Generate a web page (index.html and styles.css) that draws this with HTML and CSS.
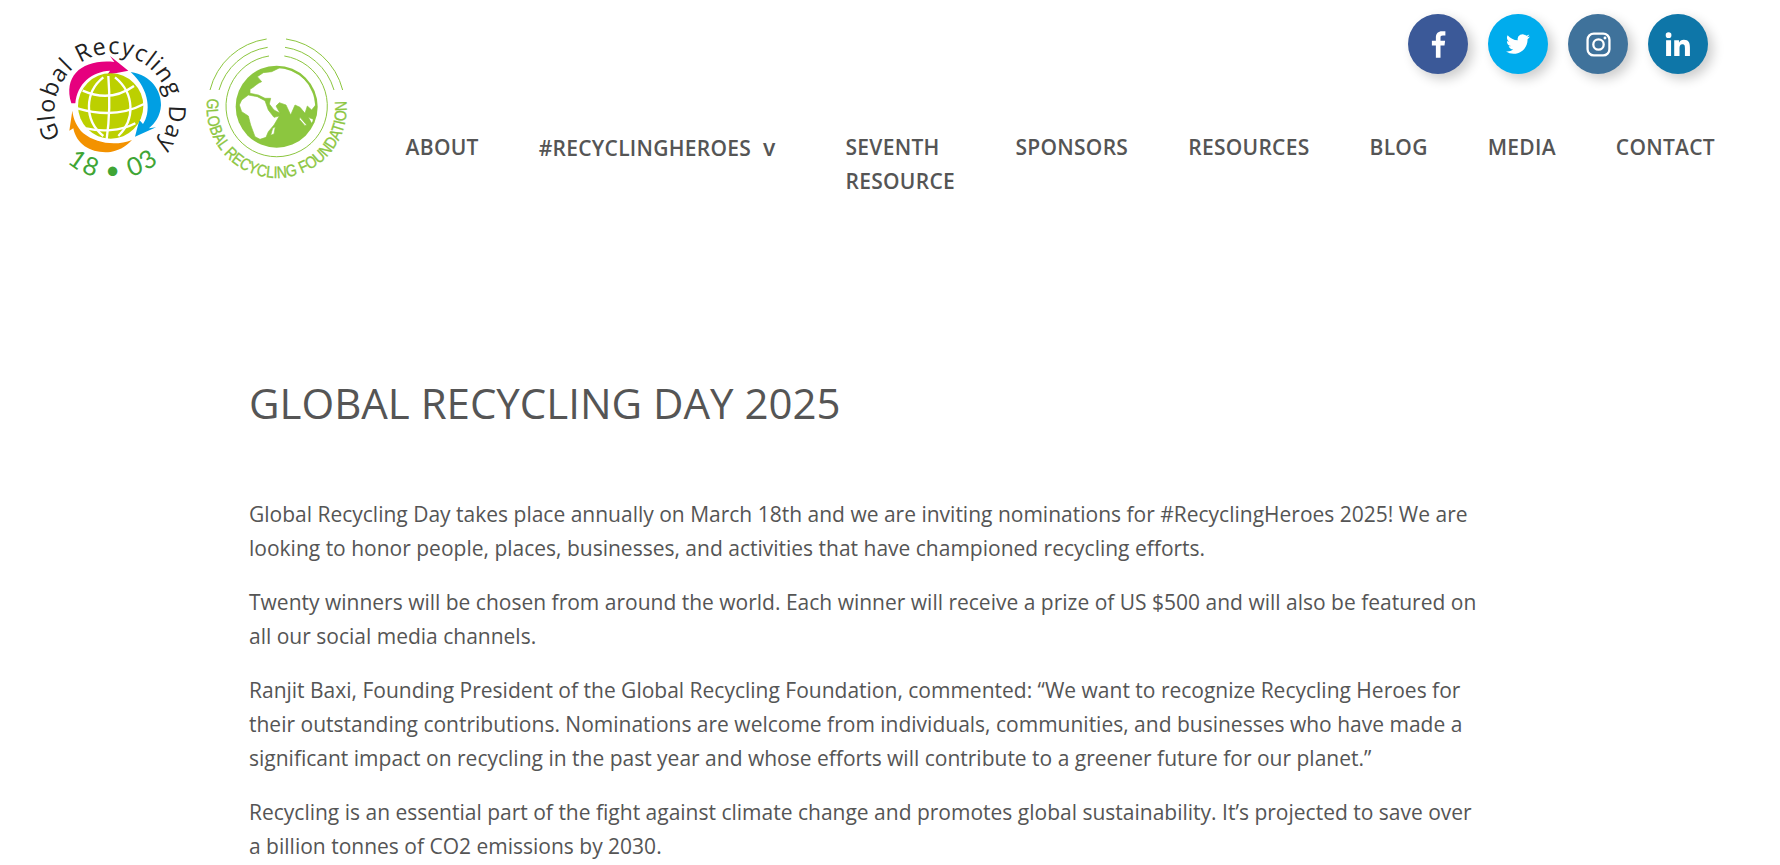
FILE: index.html
```html
<!DOCTYPE html>
<html lang="en">
<head>
  <meta charset="UTF-8">
  <title>Global Recycling Day 2025</title>
  <link rel="stylesheet" href="styles.css">
</head>
<body>
  <header class="site-header">
    <a class="logo" href="#">
      <svg class="logo-svg" viewBox="0 0 1020 510" width="340" height="170">
        <defs>
          <clipPath id="earth-clip"><circle cx="230" cy="230" r="116"/></clipPath>
        </defs>
        <!-- arrows -->
        <path fill="#e6007e" d="M154 250C128 165 190 116 283 126L270 108L325 152L262 164L270 152C215 155 172 190 166 250Z"/>
        <path fill="#009fe3" d="M332 156C395 165 424 215 423 255C421 290 404 310 387 325L408 322L345 350L358 300L369 312C392 280 392 210 332 156Z"/>
        <path fill="#f39200" d="M157 272L148 332L160 325C170 378 220 402 272 396C305 390 325 372 336 360C290 378 230 372 190 340C170 320 160 298 157 272Z"/>
        <!-- globe -->
        <circle cx="272" cy="258" r="98" fill="#bcd000"/>
        <g fill="none" stroke="#fff" stroke-width="7">
          <path d="M250 172C195 215 190 300 250 348"/>
          <path d="M285 172C345 220 345 300 295 348"/>
          <path d="M265 168C270 230 268 300 260 358"/>
          <path d="M188 212C240 235 290 235 342 198"/>
          <path d="M172 265C240 285 310 285 372 252"/>
          <path d="M198 325C240 335 300 335 346 310"/>
        </g>
        <!-- ring text -->
        <path id="ring" fill="none" d="M122 352A172 172 0 1 1 420 366"/>
        <text class="logo-ring"><textPath href="#ring" textLength="735">Global Recycling Day</textPath></text>
        <path id="date" fill="none" d="M117 403A210 210 0 0 0 439 403"/>
        <text class="logo-date"><textPath href="#date" startOffset="50%" text-anchor="middle" textLength="300">18 • 03</textPath></text>
        <!-- foundation logo -->
        <g fill="none" stroke="#8cc63f" stroke-width="3">
          <path d="M570 210A205 205 0 0 1 740 57M798 57A205 205 0 0 1 968 210"/>
          <path d="M597 210A180 180 0 0 1 743 82M795 82A180 180 0 0 1 942 210"/>
          <path d="M747 108A152 152 0 1 0 793 108"/>
        </g>
        <g transform="translate(540 30)">
          <circle cx="230" cy="230" r="123" fill="#8cc63f"/>
          <g fill="#fff" stroke="#8cc63f" stroke-width="2" clip-path="url(#earth-clip)">
            <path d="M150 178C165 170 170 160 185 155L172 140L190 128L215 125L240 113L268 117L300 135L325 160L342 195L347 225L335 240L322 228L315 250L300 232L285 225L272 255L258 225L238 218L228 228L240 250L222 240L208 222L212 205L195 205L175 195L150 190Z"/>
            <path d="M145 195L172 200L195 212L205 240L222 262L238 258L222 285L205 305L198 322L180 328L165 320L152 285L145 258L125 245L118 225L125 210Z"/>
            <path d="M218 295L226 290L222 312L212 316Z"/>
            <path d="M300 262L320 285L315 287L298 268Z"/>
            <path d="M325 262L345 270L335 280Z"/>
          </g>
        </g>
        <path id="gf" fill="none" d="M562 235A210 210 0 1 0 978 235"/>
        <text class="logo-gf"><textPath href="#gf" textLength="710" lengthAdjust="spacingAndGlyphs">GLOBAL RECYCLING FOUNDATION</textPath></text>
      </svg>
    </a>
    <div class="header-right">
      <div class="social">
        <a class="social-btn fb" href="#"><svg viewBox="0 0 24 24" width="30" height="30"><path fill="#fff" d="M14 23V13.2h3.2l.5-3.8H14V7c0-1.100.3-1.800 1.900-1.800h2V1.800C17.500 1.800 16.400 1.700 15.100 1.700c-2.800 0-4.800 1.700-4.800 4.900v2.800H7.100v3.800h3.200V23z"/></svg></a>
        <a class="social-btn tw" href="#"><svg viewBox="0 0 24 24" width="24" height="24"><path fill="#fff" d="M23.950 4.570a10 10 0 0 1-2.820.77 4.960 4.960 0 0 0 2.160-2.720c-.95.550-2 .96-3.130 1.190a4.920 4.920 0 0 0-8.380 4.480C7.690 8.090 4.070 6.130 1.640 3.160a4.820 4.820 0 0 0-.67 2.480c0 1.710.87 3.210 2.190 4.090a4.900 4.900 0 0 1-2.230-.61v.06a4.920 4.920 0 0 0 3.950 4.830 4.990 4.990 0 0 1-2.210.08 4.940 4.940 0 0 0 4.610 3.420A9.870 9.870 0 0 1 0 19.540a14 14 0 0 0 7.560 2.210c9.050 0 14-7.500 14-13.980 0-.21 0-.42-.02-.63a9.940 9.940 0 0 0 2.410-2.570z"/></svg></a>
        <a class="social-btn ig" href="#"><svg viewBox="0 0 24 24" width="25" height="25"><rect x="1.500" y="1.500" width="21" height="21" rx="6" fill="none" stroke="#fff" stroke-width="2.200"/><circle cx="12" cy="12" r="5" fill="none" stroke="#fff" stroke-width="2.200"/><circle cx="18.200" cy="5.800" r="1.400" fill="#fff"/></svg></a>
        <a class="social-btn li" href="#"><svg viewBox="0 0 24 24" width="26" height="26"><path fill="#fff" d="M1 8.500h4.600V23H1zM3.300 1.200a2.600 2.600 0 1 1 0 5.300 2.600 2.600 0 0 1 0-5.300zM8.500 8.500h4.400v2h.1c.6-1.200 2.100-2.400 4.400-2.400 4.700 0 5.600 3.100 5.600 7.100V23h-4.600v-6.900c0-1.700 0-3.800-2.300-3.800s-2.700 1.800-2.700 3.700v7H8.500z"/></svg></a>
      </div>
      <nav class="main-nav">
        <a href="#">ABOUT</a>
        <a class="has-sub" href="#">#RECYCLINGHEROES <span class="caret">v</span></a>
        <a class="wrap" href="#">SEVENTH RESOURCE</a>
        <a href="#">SPONSORS</a>
        <a href="#">RESOURCES</a>
        <a href="#">BLOG</a>
        <a href="#">MEDIA</a>
        <a href="#">CONTACT</a>
      </nav>
    </div>
  </header>

  <main class="content">
    <h1>GLOBAL RECYCLING DAY 2025</h1>
    <p>Global Recycling Day takes place annually on March 18th and we are inviting nominations for #RecyclingHeroes 2025! We are looking to honor people, places, businesses, and activities that have championed recycling efforts.</p>
    <p>Twenty winners will be chosen from around the world. Each winner will receive a prize of US $500 and will also be featured on all our social media channels.</p>
    <p>Ranjit Baxi, Founding President of the Global Recycling Foundation, commented: “We want to recognize Recycling Heroes for their outstanding contributions. Nominations are welcome from individuals, communities, and businesses who have made a significant impact on recycling in the past year and whose efforts will contribute to a greener future for our planet.”</p>
    <p>Recycling is an essential part of the fight against climate change and promotes global sustainability. It’s projected to save over a billion tonnes of CO2 emissions by 2030.</p>
  </main>
</body>
</html>
```

FILE: styles.css
```css
html {
  overflow: hidden;
}
body {
  margin: 0;
  height: 865px;
  overflow: hidden;
  background-color: #fff;
  color: #555;
  font-family: "Open Sans", sans-serif;
  font-size: 21px;
  line-height: 34px;
}
a {
  color: inherit;
  text-decoration: none;
}
.site-header {
  display: flex;
  justify-content: space-between;
  padding: 14px 65px 0 20px;
  height: 374px;
  box-sizing: border-box;
}
.logo {
  display: block;
  margin-top: 6px;
}
.logo-svg {
  display: block;
}
.logo-ring {
  font-family: "Open Sans", sans-serif;
  font-size: 70px;
  fill: #222;
}
.logo-date {
  font-family: Lato, sans-serif;
  font-size: 76px;
  fill: #3fa535;
}
.logo-gf {
  font-family: "Liberation Sans Narrow", "Liberation Sans", sans-serif;
  font-size: 50px;
  fill: #8cc63f;
  stroke: #8cc63f;
  stroke-width: 1;
}
.header-right {
  display: flex;
  flex-direction: column;
  align-items: flex-end;
}
.social {
  display: flex;
  gap: 20px;
  margin-right: 7px;
}
.social-btn {
  width: 60px;
  height: 60px;
  border-radius: 50%;
  display: flex;
  align-items: center;
  justify-content: center;
  box-shadow: 5px 5px 12px rgba(0, 0, 0, 0.2);
}
.fb { background-color: #3b5998; }
.tw { background-color: #00aced; }
.ig { background-color: #3f729b; }
.li { background-color: #0e76a8; }
.main-nav {
  display: flex;
  align-items: flex-start;
  gap: 60px;
  margin-top: 56px;
  font-weight: 600;
  letter-spacing: 0.28px;
}
.has-sub {
  margin-right: 10px;
}
.caret {
  margin-left: 6px;
  font-size: 23px;
}
.wrap {
  width: 110px;
}
.content {
  width: 1232px;
  margin-left: 249px;
}
.content h1 {
  margin: 0 0 65px;
  font-size: 42px;
  line-height: 58px;
  font-weight: 400;
  color: #555;
}
.content p {
  margin: 0 0 20px;
}
```
